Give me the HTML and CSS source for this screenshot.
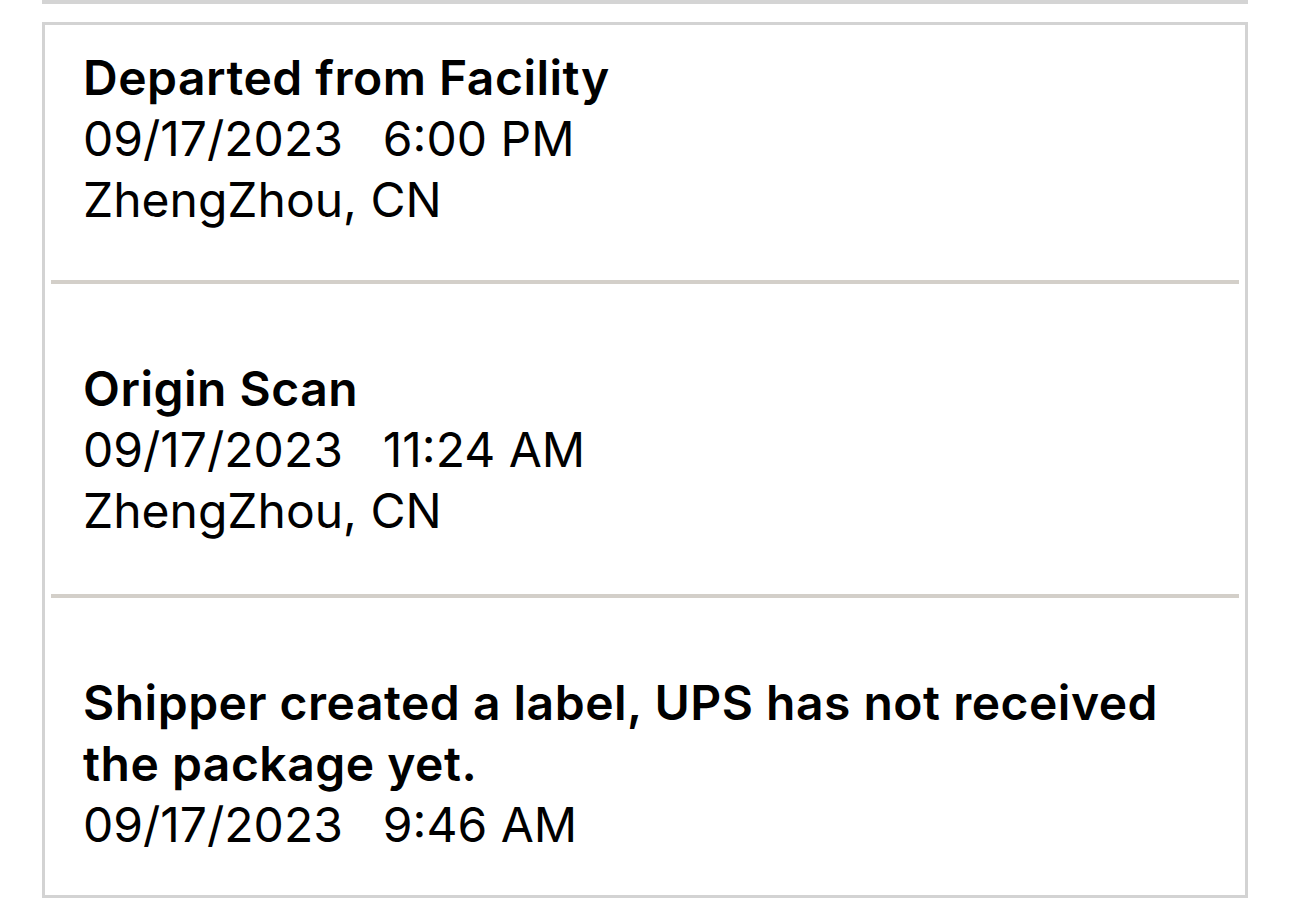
FILE: index.html
```html
<!DOCTYPE html>
<html lang="en">
<head>
<meta charset="utf-8">
<title>Tracking history</title>
<link rel="stylesheet" href="styles.css">
</head>
<body>
<div class="page">
  <div class="top-rule"></div>
  <div class="card">
    <div class="event first">
      <div class="title">Departed from Facility</div>
      <div class="when"><span>09/17/2023</span><span class="time">6:00 PM</span></div>
      <div class="where">ZhengZhou, CN</div>
    </div>
    <div class="sep"></div>
    <div class="event">
      <div class="title">Origin Scan</div>
      <div class="when"><span>09/17/2023</span><span class="time">11:24 AM</span></div>
      <div class="where">ZhengZhou, CN</div>
    </div>
    <div class="sep"></div>
    <div class="event last">
      <div class="title">Shipper created a label, UPS has not received the package yet.</div>
      <div class="when"><span>09/17/2023</span><span class="time">9:46 AM</span></div>
    </div>
  </div>
</div>
</body>
</html>
```

FILE: styles.css
```css
html, body {
  margin: 0;
  padding: 0;
  background: #ffffff;
}

body {
  font-family: Inter, "Noto Sans", "Liberation Sans", sans-serif;
  color: #000000;
  overflow: hidden;
}

.page {
  padding: 0 42px;
  width: 1206px;
}

.top-rule {
  height: 4px;
  background: #d4d4d4;
  margin-bottom: 18px;
}

.card {
  border: 3px solid #d3d3d3;
  display: flex;
  flex-direction: column;
}

.event {
  padding: 74px 40px 53px 38px;
  font-size: 48px;
  line-height: 61px;
}

.event.first {
  padding-top: 22px;
  padding-bottom: 50px;
}

.event.last {
  padding-bottom: 40px;
}

.title {
  font-weight: 600;
  letter-spacing: 0.5px;
}

.when {
  display: flex;
}

.time {
  margin-left: 40px;
}

.sep {
  height: 4px;
  margin: 0 6px;
  background: #d3cfc9;
}
```
